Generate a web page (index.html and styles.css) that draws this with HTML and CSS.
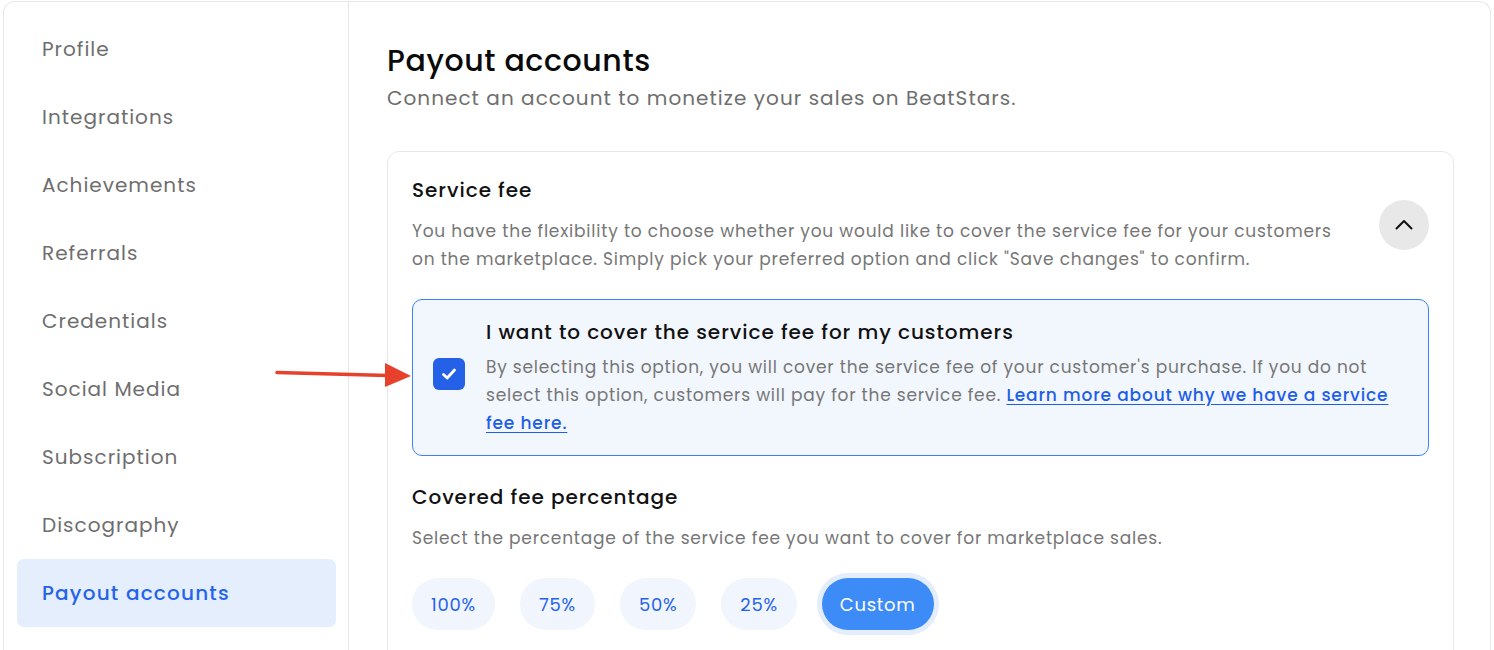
FILE: index.html
```html
<!DOCTYPE html>
<html lang="en">
<head>
<meta charset="utf-8">
<title>Payout accounts</title>
<link rel="stylesheet" href="styles.css">
</head>
<body>
<div class="frame">
  <nav class="sidebar">
    <a class="nav-item">Profile</a>
    <a class="nav-item">Integrations</a>
    <a class="nav-item">Achievements</a>
    <a class="nav-item">Referrals</a>
    <a class="nav-item">Credentials</a>
    <a class="nav-item">Social Media</a>
    <a class="nav-item">Subscription</a>
    <a class="nav-item">Discography</a>
    <a class="nav-item active">Payout accounts</a>
  </nav>
  <main class="main">
    <h1 class="page-title">Payout accounts</h1>
    <p class="page-sub">Connect an account to monetize your sales on BeatStars.</p>
    <section class="card">
      <div class="card-head">
        <div class="card-head-text">
          <h2 class="section-title">Service fee</h2>
          <p class="section-desc">You have the flexibility to choose whether you would like to cover the service fee for your customers<br>on the marketplace. Simply pick your preferred option and click "Save changes" to confirm.</p>
        </div>
        <button class="collapse-btn" aria-label="Collapse">
          <svg width="20" height="20" viewBox="0 0 20 20"><path d="M2.5 13.5 L10 6 L17.5 13.5" fill="none" stroke="#111" stroke-width="2" stroke-linecap="round" stroke-linejoin="round"/></svg>
        </button>
      </div>
      <label class="option">
        <span class="checkbox">
          <svg width="18" height="18" viewBox="0 0 18 18"><path d="M3.5 9.5 L7.2 13 L14.5 5" fill="none" stroke="#fff" stroke-width="2.8" stroke-linecap="round" stroke-linejoin="round"/></svg>
        </span>
        <span class="option-text">
          <span class="option-title">I want to cover the service fee for my customers</span>
          <span class="option-desc">By selecting this option, you will cover the service fee of your customer's purchase. If you do not<br>select this option, customers will pay for the service fee. <a class="link">Learn more about why we have a service<br>fee here.</a></span>
        </span>
      </label>
      <h2 class="section-title sub">Covered fee percentage</h2>
      <p class="section-desc">Select the percentage of the service fee you want to cover for marketplace sales.</p>
      <div class="pills">
        <button class="pill">100%</button>
        <button class="pill">75%</button>
        <button class="pill">50%</button>
        <button class="pill">25%</button>
        <button class="pill selected">Custom</button>
      </div>
    </section>
  </main>
</div>
<svg class="arrow" width="150" height="34" viewBox="0 0 150 34">
  <path d="M7 12.5 L118 15.5" stroke="#e8412b" stroke-width="3.6" stroke-linecap="round" fill="none"/>
  <polygon points="115,3 141,16 115,27" fill="#e8412b"/>
</svg>
</body>
</html>
```
FILE: styles.css
```css
* { box-sizing: border-box; }
html, body { margin: 0; padding: 0; background: #fff; }
body {
  font-family: "Poppins", "Inter", "Noto Sans", sans-serif;
  color: #111;
  position: relative;
  height: 650px;
  overflow: hidden;
}
.frame {
  margin: 1px 3px 0 3px;
  border: 1px solid #e7e7e7;
  border-bottom: none;
  border-radius: 12px 12px 0 0;
  display: grid;
  grid-template-columns: 345px 1fr;
  height: 649px;
  overflow: hidden;
}
.sidebar {
  border-right: 1px solid #e7e7e7;
  padding: 13px 12px 0 13px;
  display: flex;
  flex-direction: column;
}
.nav-item {
  display: flex;
  align-items: center;
  height: 68px;
  flex: none;
  padding-left: 25px;
  font-size: 20px;
  color: #6e6e6e;
  border-radius: 7px;
  letter-spacing: 0.05em;
}
.nav-item.active {
  background: #e4eefc;
  color: #2563eb;
  font-weight: 500;
  letter-spacing: 0.06em;
}
.main {
  padding: 41px 36px 0 38px;
}
.page-title {
  margin: 0;
  font-size: 30px;
  line-height: 36px;
  font-weight: 500;
  color: #0a0a0a;
  letter-spacing: 0.02em;
}
.page-sub {
  margin: 5px 0 0;
  font-size: 20px;
  line-height: 28px;
  color: #6e6e6e;
  letter-spacing: 0.052em;
}
.card {
  margin-top: 39px;
  border: 1px solid #e7e7e7;
  border-radius: 12px;
  padding: 24px 24px 40px;
}
.card-head {
  display: flex;
  align-items: center;
  justify-content: space-between;
}
.section-title {
  margin: 0;
  font-size: 20px;
  line-height: 28px;
  font-weight: 500;
  color: #111;
  letter-spacing: 0.048em;
}
.section-title.sub { margin-top: 27px; }
.section-desc {
  margin: 13px 0 0;
  font-size: 17px;
  line-height: 28px;
  color: #767676;
  letter-spacing: 0.046em;
}
.collapse-btn {
  width: 50px;
  height: 50px;
  border-radius: 50%;
  border: none;
  background: #e8e8e8;
  display: flex;
  align-items: center;
  justify-content: center;
  padding: 0;
  flex: none;
}
.option {
  margin-top: 26px;
  display: flex;
  align-items: center;
  gap: 21px;
  border: 1.5px solid #3b82f6;
  background: #f2f6fd;
  border-radius: 10px;
  padding: 18px 20px 18px 20px;
}
.checkbox {
  width: 32px;
  height: 32px;
  border-radius: 6px;
  background: #2461e6;
  display: flex;
  align-items: center;
  justify-content: center;
  flex: none;
  margin-bottom: 8px;
}
.option-text { display: flex; flex-direction: column; gap: 7px; }
.option-title {
  font-size: 20px;
  line-height: 28px;
  font-weight: 500;
  color: #111;
  letter-spacing: 0.048em;
}
.option-desc {
  font-size: 17px;
  line-height: 28px;
  color: #767676;
  letter-spacing: 0.045em;
}
.link {
  color: #1e5ee8;
  text-decoration: underline;
  text-underline-offset: 3px;
  font-weight: 500;
  letter-spacing: 0.05em;
}
.pills {
  margin-top: 26px;
  display: flex;
  gap: 25px;
  align-items: center;
}
.pill {
  height: 52px;
  border-radius: 26px;
  border: none;
  background: #f1f5fd;
  color: #2563eb;
  font-family: inherit;
  font-size: 18px;
  letter-spacing: 0.04em;
  padding: 0 19px;
}
.pill.selected {
  background: #3d8bf6;
  color: #fff;
  padding: 0 18px;
  box-shadow: 0 0 0 5px #e4edfb;
}
.arrow {
  position: absolute;
  left: 270px;
  top: 360px;
}
```
